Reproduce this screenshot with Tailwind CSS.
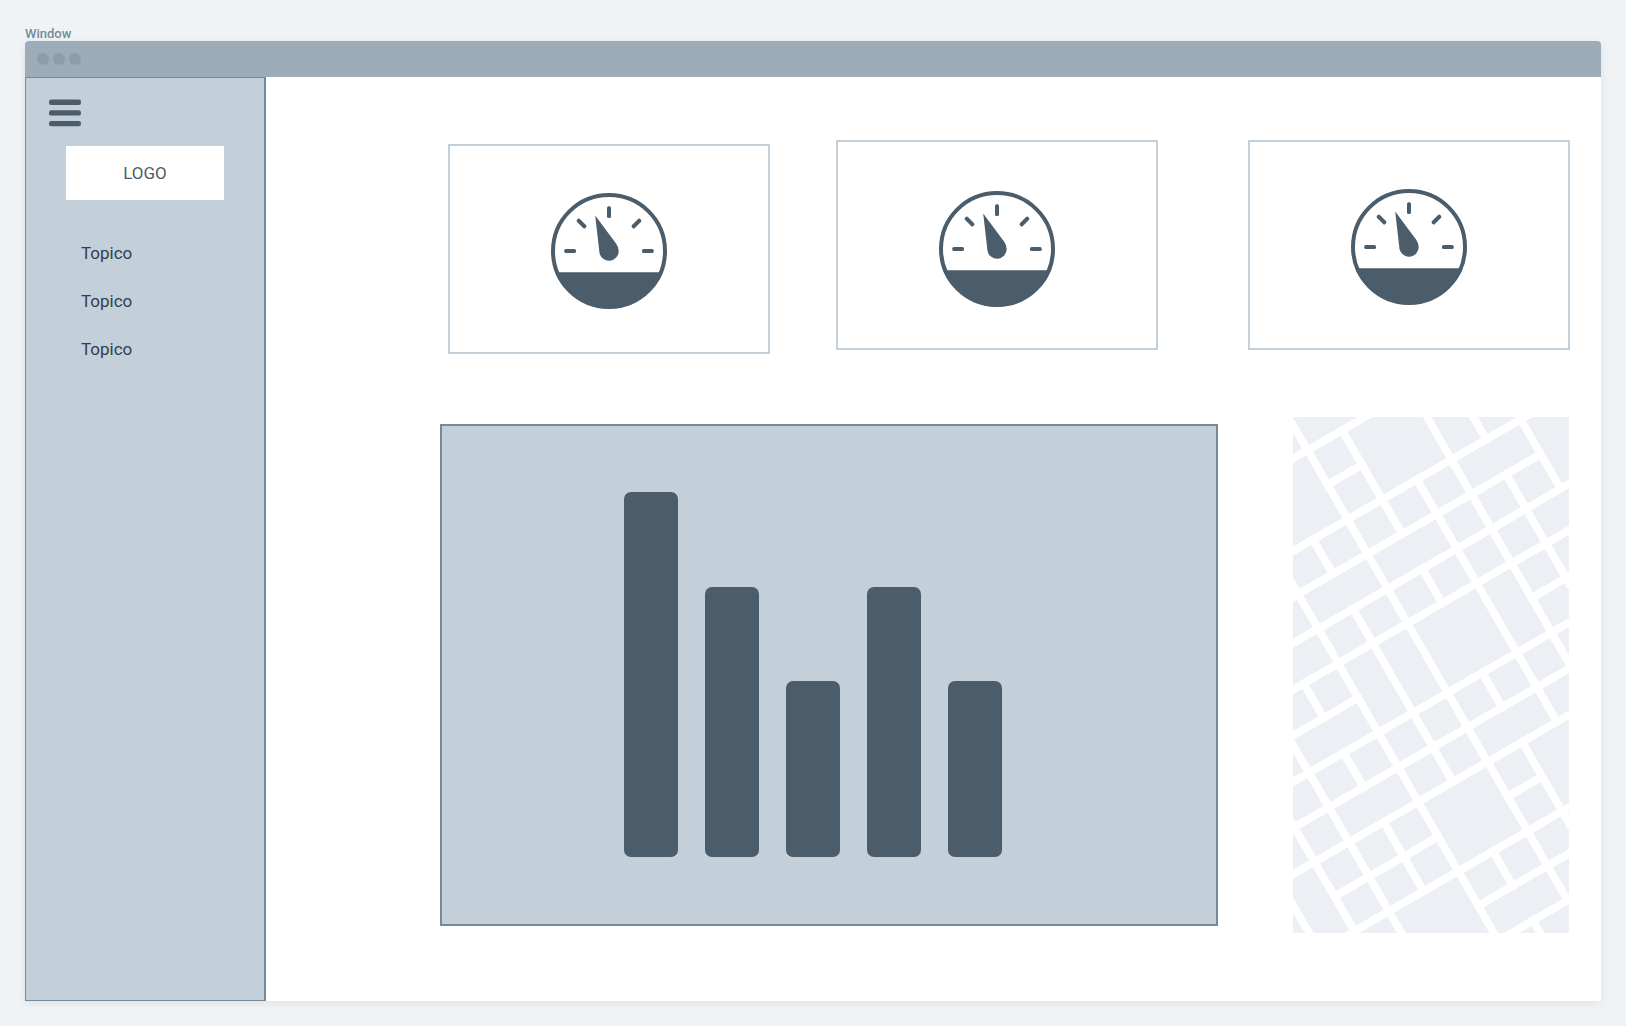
<!DOCTYPE html>
<html lang="pt">
<head>
<meta charset="utf-8">
<meta name="viewport" content="width=device-width, initial-scale=1">
<title>Window</title>
<script src="https://cdn.jsdelivr.net/npm/@tailwindcss/browser@4"></script>
</head>
<body class="flex min-h-screen flex-col bg-[#eff3f6] px-[25px] pt-[26px] pb-[25px] font-['Roboto',sans-serif]">
<svg class="hidden" aria-hidden="true">
  <symbol id="gauge" viewBox="0 0 116 116">
    <circle cx="58" cy="58" r="56" fill="none" stroke="#4b5c6a" stroke-width="4"/>
    <path d="M4.2 79.2H111.8A58 58 0 0 1 4.2 79.2Z" fill="#4b5c6a"/>
    <g fill="#4b5c6a">
      <rect x="13.3" y="56" width="11.7" height="4" rx="1.6"/>
      <rect x="13.3" y="56" width="11.7" height="4" rx="1.6" transform="rotate(45 58 58)"/>
      <rect x="13.3" y="56" width="11.7" height="4" rx="1.6" transform="rotate(90 58 58)"/>
      <rect x="13.3" y="56" width="11.7" height="4" rx="1.6" transform="rotate(135 58 58)"/>
      <rect x="13.3" y="56" width="11.7" height="4" rx="1.6" transform="rotate(180 58 58)"/>
      <path d="M44.2 22.6L65.2 50.8Q67.7 54.4 67.7 58A9.7 9.7 0 0 1 48.5 60Z"/>
    </g>
  </symbol>
</svg>

<p class="h-[15px] text-[13px] leading-[15px] font-medium text-[#788a98]">Window</p>
<div class="flex flex-1 flex-col rounded-t bg-white shadow-[0_2px_8px_rgba(0,0,0,0.07)]">
  <header class="flex h-9 items-center gap-1 rounded-t bg-[#9dacb9] px-3">
    <span class="size-3 rounded-full bg-[#8d9dab]"></span>
    <span class="size-3 rounded-full bg-[#8d9dab]"></span>
    <span class="size-3 rounded-full bg-[#8d9dab]"></span>
  </header>
  <div class="flex flex-1">
    <aside class="w-[241px] shrink-0 border border-r-2 border-[#788a98] bg-[#c3cfd9] pt-[21px]">
      <button type="button" aria-label="Menu" class="ml-[23px] block">
        <svg class="h-7 w-8" viewBox="0 0 32 28" fill="#4b5c6a"><rect y="0.5" width="32" height="5.4" rx="2.2"/><rect y="11.2" width="32" height="5.4" rx="2.2"/><rect y="21.9" width="32" height="5.4" rx="2.2"/></svg>
      </button>
      <a href="#" class="mt-[19px] ml-10 flex h-[54px] w-[158px] items-center justify-center bg-white text-[17px] leading-6 text-[#4b5c6a]">LOGO</a>
      <nav class="mt-[41px] ml-[55px] flex flex-col gap-6 text-[17px] leading-6 text-[#2f4050]">
        <a href="#">Topico</a>
        <a href="#">Topico</a>
        <a href="#">Topico</a>
      </nav>
    </aside>

    <main class="min-w-0 flex-1 pt-[63px] pr-[31px] pb-[68px]">
      <section class="flex items-start pl-[182px]">
        <div class="mt-1 flex h-[210px] flex-1 justify-center border-2 border-[#c3cfd9] pt-[47px]"><svg class="size-[116px]" role="img" aria-label="Gauge"><use href="#gauge"/></svg></div>
        <div class="ml-[66px] flex h-[210px] flex-1 justify-center border-2 border-[#c3cfd9] pt-[49px]"><svg class="size-[116px]" role="img" aria-label="Gauge"><use href="#gauge"/></svg></div>
        <div class="ml-[90px] flex h-[210px] flex-1 justify-center border-2 border-[#c3cfd9] pt-[47px]"><svg class="size-[116px]" role="img" aria-label="Gauge"><use href="#gauge"/></svg></div>
      </section>
      <section class="mt-[63px] flex items-center pr-px pl-[174px]">
        <div class="flex h-[502px] flex-1 items-end justify-center gap-[27px] border-2 border-[#788a98] bg-[#c3cfd9] pr-8 pb-[67px]">
          <span class="w-[54px] rounded-[7px] bg-[#4b5c6a]" style="height:365px"></span>
          <span class="w-[54px] rounded-[7px] bg-[#4b5c6a]" style="height:270px"></span>
          <span class="w-[54px] rounded-[7px] bg-[#4b5c6a]" style="height:176px"></span>
          <span class="w-[54px] rounded-[7px] bg-[#4b5c6a]" style="height:270px"></span>
          <span class="w-[54px] rounded-[7px] bg-[#4b5c6a]" style="height:176px"></span>
        </div>
        <svg class="ml-[75px] h-[516px] w-[276px] shrink-0" viewBox="0 0 276 516" role="img" aria-label="Map">
          <defs>
            <pattern id="blocks" width="40" height="40" patternUnits="userSpaceOnUse"><rect width="32" height="32" fill="#eceff4"/></pattern>
          </defs>
          <g transform="rotate(-30)" fill="#eceff4">
            <rect x="-280" y="-40" width="560" height="680" fill="url(#blocks)"/>
            <!-- city blocks wider or taller than one cell -->
            <rect x="0" y="0" width="72" height="32"/>
            <rect x="40" y="40" width="72" height="72"/>
            <rect x="-80" y="40" width="72" height="72"/>
            <rect x="120" y="40" width="32" height="72"/>
            <rect x="120" y="120" width="72" height="32"/>
            <rect x="200" y="120" width="72" height="72"/>
            <rect x="0" y="160" width="72" height="32"/>
            <rect x="-80" y="160" width="72" height="32"/>
            <rect x="160" y="200" width="72" height="32"/>
            <rect x="-160" y="200" width="72" height="32"/>
            <rect x="80" y="240" width="32" height="72"/>
            <rect x="0" y="240" width="72" height="72"/>
            <rect x="-40" y="240" width="32" height="72"/>
            <rect x="-80" y="240" width="32" height="72"/>
            <rect x="-160" y="280" width="72" height="32"/>
            <rect x="0" y="360" width="72" height="32"/>
            <rect x="-160" y="360" width="72" height="32"/>
            <rect x="40" y="400" width="72" height="72"/>
            <rect x="-80" y="400" width="72" height="72"/>
            <rect x="-240" y="400" width="32" height="72"/>
            <rect x="-280" y="400" width="32" height="72"/>
            <rect x="-160" y="480" width="72" height="72"/>
            <rect x="-80" y="520" width="72" height="32"/>
            <rect x="-40" y="560" width="72" height="32"/>
          </g>
        </svg>
      </section>
    </main>
  </div>
</div>
</body>
</html>
